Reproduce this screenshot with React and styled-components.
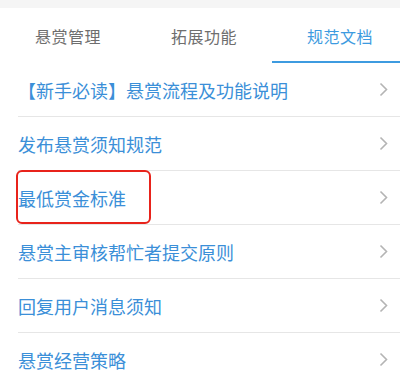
import React, { useState } from 'react'
import styled, { createGlobalStyle } from 'styled-components'

const GlobalStyle = createGlobalStyle`
  html, body {
    margin: 0;
    padding: 0;
    background: #ffffff;
    font-family: "Noto Sans CJK SC", "Noto Sans", sans-serif;
  }
`

const Page = styled.div`
  width: 400px;
  height: 381px;
  overflow: hidden;
  background: #ffffff;
`

const TopStrip = styled.div`
  height: 8px;
  background: #f5f5f5;
`

const TabBar = styled.nav`
  display: flex;
  height: 55px;
  overflow: hidden;
`

const Tab = styled.div`
  flex: 0 0 136px;
  display: flex;
  align-items: center;
  justify-content: center;
  box-sizing: border-box;
  padding-top: 2px;
  font-size: 16px;
  letter-spacing: 0.5px;
  color: ${(p) => (p.$active ? '#3d9be0' : '#6e6e6e')};
  border-bottom: 2px solid ${(p) => (p.$active ? '#3d9be0' : 'transparent')};
  cursor: pointer;
`

const List = styled.ul`
  list-style: none;
  margin: 0;
  padding: 0 0 0 18px;
`

const Row = styled.li`
  position: relative;
  display: flex;
  align-items: center;
  justify-content: space-between;
  height: 53px;
  padding-right: 12px;
  border-bottom: 1px solid #e6e6e6;
  cursor: pointer;
`

const Label = styled.span`
  font-size: 18px;
  color: #3b8fd8;
  white-space: nowrap;
`

const Highlight = styled.span`
  position: absolute;
  left: -2px;
  top: -1px;
  width: 135px;
  height: 54px;
  box-sizing: border-box;
  border: 2.5px solid #e8231b;
  border-radius: 6px;
  pointer-events: none;
`

const Chevron = () => (
  <svg width="9" height="15" viewBox="0 0 9 15">
    <path d="M1.5 1.5 L7.5 7.5 L1.5 13.5" fill="none" stroke="#b4b4b4" strokeWidth="1.6" />
  </svg>
)

const tabs = ['悬赏管理', '拓展功能', '规范文档']

const docs = [
  '【新手必读】悬赏流程及功能说明',
  '发布悬赏须知规范',
  '最低赏金标准',
  '悬赏主审核帮忙者提交原则',
  '回复用户消息须知',
  '悬赏经营策略',
]

export default function App() {
  const [active, setActive] = useState(2)

  return (
    <>
      <GlobalStyle />
      <Page>
        <TopStrip />
        <TabBar>
          {tabs.map((t, i) => (
            <Tab key={t} $active={i === active} onClick={() => setActive(i)}>
              {t}
            </Tab>
          ))}
        </TabBar>
        <List>
          {docs.map((d, i) => (
            <Row key={d}>
              <Label>{d}</Label>
              <Chevron />
              {i === 2 && <Highlight />}
            </Row>
          ))}
        </List>
      </Page>
    </>
  )
}
